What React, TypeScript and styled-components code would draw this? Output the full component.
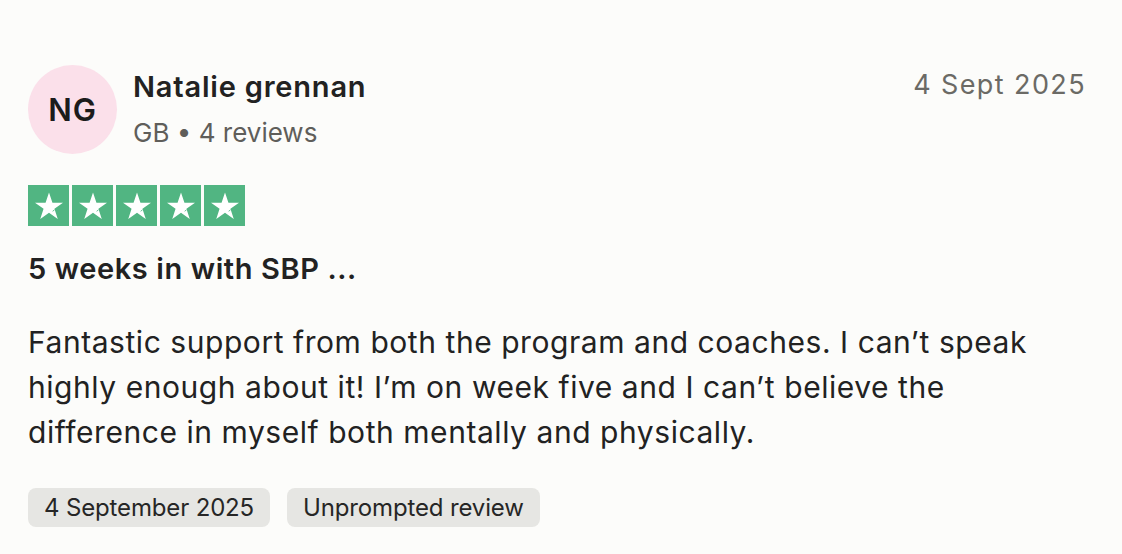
import React from "react";
import styled, { createGlobalStyle } from "styled-components";

const Global = createGlobalStyle`
  html, body { margin: 0; padding: 0; background: #fcfcfa; }
  body { font-family: Inter, "Liberation Sans", Arial, sans-serif; color: #1c1c1c; }
`;

const Card = styled.article`
  width: 1122px;
  height: 554px;
  box-sizing: border-box;
  padding: 65px 36px 0 28px;
  background: #fcfcfa;
`;

const Header = styled.header`
  display: flex;
  align-items: flex-start;
`;

const Avatar = styled.div`
  width: 89px;
  height: 89px;
  border-radius: 50%;
  background: #fbe0ea;
  display: flex;
  align-items: center;
  justify-content: center;
  font-size: 31px;
  font-weight: 600;
  color: #1c1c1c;
  flex-shrink: 0;
  letter-spacing: 0.8px;
`;

const Who = styled.div`
  display: flex;
  flex-direction: column;
  margin-left: 16px;
  padding-top: 4px;
  flex: 1;
`;

const Name = styled.div`
  font-size: 29px;
  font-weight: 600;
  line-height: 36px;
  letter-spacing: 0.8px;
  color: #222;
`;

const Meta = styled.div`
  font-size: 26px;
  line-height: 36px;
  margin-top: 10px;
  color: #5f5e5a;
`;

const DateText = styled.time`
  font-size: 27px;
  line-height: 36px;
  color: #6b6a65;
  padding-top: 2px;
  letter-spacing: 1.4px;
`;

const Stars = styled.div`
  display: flex;
  gap: 3px;
  margin-top: 31px;
`;

const StarBox = styled.span`
  width: 41px;
  height: 41px;
  background: #51b582;
  display: flex;
  align-items: center;
  justify-content: center;
`;

const Title = styled.h2`
  margin: 25px 0 0;
  font-size: 29px;
  line-height: 36px;
  font-weight: 600;
  letter-spacing: 0.6px;
  color: #222;
`;

const Body = styled.p`
  margin: 33px 0 0;
  font-size: 30px;
  line-height: 45px;
  max-width: 1058px;
  color: #222;
  letter-spacing: 0.55px;
`;

const Tags = styled.div`
  display: flex;
  gap: 17px;
  margin-top: 33px;
`;

const Tag = styled.span`
  background: #e6e6e3;
  border-radius: 8px;
  height: 39px;
  padding: 0 16px;
  display: flex;
  align-items: center;
  font-size: 24px;
  color: #262626;
  letter-spacing: -0.15px;
`;

const Star = () => (
  <svg width="30" height="30" viewBox="0 0 24 24">
    <path
      d="M12 1.2l2.75 8.1h8.45l-6.85 4.95 2.65 8.05L12 17.35l-7 4.95 2.65-8.05L.8 9.3h8.45z"
      fill="#fff"
    />
    <path d="M14.9 16.2l1.5-1.1" stroke="#51b582" strokeWidth="0.7" />
  </svg>
);

export default function App() {
  return (
    <>
      <Global />
      <Card>
        <Header>
          <Avatar>NG</Avatar>
          <Who>
            <Name>Natalie grennan</Name>
            <Meta>GB • 4 reviews</Meta>
          </Who>
          <DateText>4 Sept 2025</DateText>
        </Header>
        <Stars>
          {[0, 1, 2, 3, 4].map((i) => (
            <StarBox key={i}>
              <Star />
            </StarBox>
          ))}
        </Stars>
        <Title>5 weeks in with SBP ...</Title>
        <Body>
          Fantastic support from both the program and coaches. I can’t speak
          highly enough about it! I’m on week five and I can’t believe the
          difference in myself both mentally and physically.
        </Body>
        <Tags>
          <Tag>4 September 2025</Tag>
          <Tag>Unprompted review</Tag>
        </Tags>
      </Card>
    </>
  );
}
